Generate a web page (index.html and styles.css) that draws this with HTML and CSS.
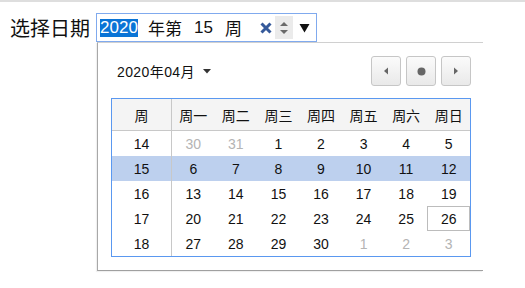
FILE: index.html
```html
<!DOCTYPE html>
<html lang="zh">
<head>
<meta charset="utf-8">
<link rel="stylesheet" href="styles.css">
</head>
<body>
<div class="topbar"></div>
<div class="field">
  <label class="label">选择日期</label>
  <div class="picker">
    <div class="input">
      <span class="sel">2020</span>
      <span class="seg-yr">年第</span>
      <span class="seg-num">15</span>
      <span class="seg-wk">周</span>
      <span class="clear"><svg width="12" height="12" viewBox="0 0 12 12"><path d="M1.5 1.5L10.5 10.5M10.5 1.5L1.5 10.5" stroke="#35599a" stroke-width="3"/></svg></span>
      <span class="spin"><svg width="18" height="23" viewBox="0 0 18 23"><path d="M5 10L9 6L13 10Z" fill="#6a6a6a"/><path d="M5 14L9 18L13 14Z" fill="#6a6a6a"/></svg></span>
      <span class="drop"><svg width="11" height="10" viewBox="0 0 11 10"><path d="M0.5 1H10.5L5.5 9.5Z" fill="#111"/></svg></span>
    </div>
    <div class="popup">
      <div class="pop-head">
        <div class="month">2020年04月 <svg class="caret" width="8" height="5" viewBox="0 0 8 5"><path d="M0 0H8L4 4.5Z" fill="#333"/></svg></div>
        <div class="navs">
          <button class="nav"><svg width="8" height="8" viewBox="0 0 8 8"><path d="M6 0.5V7.5L2 4Z" fill="#666"/></svg></button>
          <button class="nav"><svg width="9" height="9" viewBox="0 0 9 9"><circle cx="4.5" cy="4.5" r="4" fill="#666"/></svg></button>
          <button class="nav"><svg width="8" height="8" viewBox="0 0 8 8"><path d="M2 0.5V7.5L6 4Z" fill="#666"/></svg></button>
        </div>
      </div>
      <div class="cal">
        <div class="hd wk">周</div><div class="hd">周一</div><div class="hd">周二</div><div class="hd">周三</div><div class="hd">周四</div><div class="hd">周五</div><div class="hd">周六</div><div class="hd">周日</div>

        <div class="c wk">14</div><div class="c off">30</div><div class="c off">31</div><div class="c">1</div><div class="c">2</div><div class="c">3</div><div class="c">4</div><div class="c">5</div>

        <div class="c wk hl">15</div><div class="c hl">6</div><div class="c hl">7</div><div class="c hl">8</div><div class="c hl">9</div><div class="c hl">10</div><div class="c hl">11</div><div class="c hl">12</div>

        <div class="c wk">16</div><div class="c">13</div><div class="c">14</div><div class="c">15</div><div class="c">16</div><div class="c">17</div><div class="c">18</div><div class="c">19</div>

        <div class="c wk">17</div><div class="c">20</div><div class="c">21</div><div class="c">22</div><div class="c">23</div><div class="c">24</div><div class="c">25</div><div class="c today">26</div>

        <div class="c wk">18</div><div class="c">27</div><div class="c">28</div><div class="c">29</div><div class="c">30</div><div class="c off">1</div><div class="c off">2</div><div class="c off">3</div>
      </div>
    </div>
  </div>
</div>
</body>
</html>
```

FILE: styles.css
```css
html, body {
  margin: 0;
  padding: 0;
  background: #fff;
}
body {
  font-family: "Liberation Sans", "Noto Sans CJK SC", sans-serif;
  color: #111;
  width: 525px;
  height: 288px;
  overflow: hidden;
}
.topbar {
  height: 2px;
  background: #dedede;
}
.field {
  display: flex;
  align-items: center;
  padding-left: 10px;
  margin-top: 11px;
}
.label {
  font-family: "Noto Sans CJK SC", sans-serif;
  font-size: 20px;
  line-height: 29px;
  margin-right: 6px;
  color: #111;
}
.picker {
  position: relative;
}
.input {
  box-sizing: border-box;
  width: 221px;
  height: 29px;
  border: 1px solid #80aaee;
  display: flex;
  align-items: center;
  padding-left: 3px;
  font-size: 17px;
}
.input > span {
  flex-shrink: 0;
}
.sel {
  background: #0a74d6;
  color: #fff;
  line-height: 18px;
  width: 38px;
  text-align: center;
}
.seg-yr {
  font-family: "Noto Sans CJK SC", sans-serif;
  font-size: 17px;
  line-height: 18px;
  margin-left: 10px;
}
.seg-num {
  margin-left: 12px;
  line-height: 18px;
}
.seg-wk {
  font-family: "Noto Sans CJK SC", sans-serif;
  font-size: 17px;
  line-height: 18px;
  margin-left: 12px;
}
.clear {
  display: flex;
  margin-left: 18px;
}
.spin {
  display: flex;
  margin-left: 3px;
  background: #ebebeb;
}
.drop {
  display: flex;
  margin-left: 6px;
}
.popup {
  position: absolute;
  top: 29px;
  left: 1px;
  width: 386px;
  box-sizing: border-box;
  background: #fff;
  border-left: 1px solid #a8a8a8;
  border-bottom: 1px solid #a0a0a0;
  border-top: 1px solid #d0d0d0;
  padding: 13px 12px 13px 13px;
  box-shadow: -1px 1px 1px rgba(0,0,0,0.06);
}
.pop-head {
  display: flex;
  align-items: center;
  justify-content: space-between;
  height: 30px;
  margin-bottom: 12px;
}
.month {
  font-size: 14px;
  letter-spacing: 0.4px;
  padding-left: 6px;
  display: flex;
  align-items: center;
}
.caret {
  margin-left: 8px;
}
.navs {
  display: flex;
  gap: 5px;
}
.nav {
  width: 30px;
  height: 30px;
  box-sizing: border-box;
  border: 1px solid #c6c6c6;
  border-radius: 3px;
  background: linear-gradient(#fbfbfb, #e9e9e9);
  padding: 0;
  display: flex;
  align-items: center;
  justify-content: center;
}
.cal {
  box-sizing: border-box;
  width: 360px;
  border: 1px solid #5a98f0;
  display: grid;
  grid-template-columns: 60px repeat(7, 1fr);
  font-size: 14px;
}
.hd {
  height: 32px;
  box-sizing: border-box;
  background: #f4f4f4;
  border-bottom: 1px solid #c8c8c8;
  display: flex;
  align-items: center;
  justify-content: center;
  font-family: "Noto Sans CJK SC", sans-serif;
  font-size: 14px;
}
.c {
  height: 25px;
  display: flex;
  align-items: center;
  justify-content: center;
}
.wk {
  border-right: 1px solid #c8c8c8;
}
.off {
  color: #b4b4b4;
}
.hl {
  background: #bdd0ee;
}
.today {
  box-shadow: inset 0 0 0 1px #bcbcbc;
}
```
